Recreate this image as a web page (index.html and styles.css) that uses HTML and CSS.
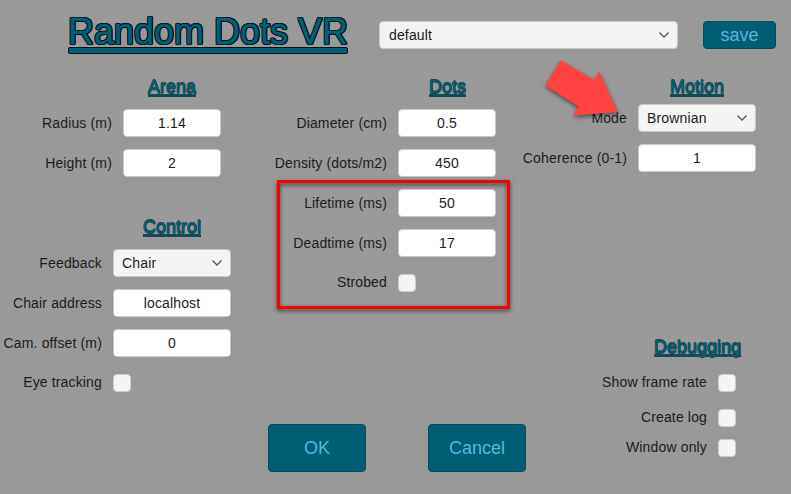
FILE: index.html
```html
<!DOCTYPE html>
<html lang="en">
<head>
<meta charset="utf-8">
<title>Random Dots VR</title>
<link rel="stylesheet" href="styles.css">
</head>
<body>
<header class="top">
  <h1 class="title">Random Dots VR</h1>
  <div class="field select preset"><span>default</span><svg class="chev" viewBox="0 0 12 8"><path d="M1.500 1.500 6 6l4.500-4.500"/></svg></div>
  <button class="btn save">save</button>
</header>
<main class="columns">
  <div class="col col-left">
    <section class="group arena">
      <h2>Arena</h2>
      <div class="row"><label>Radius (m)</label><div class="field">1.14</div></div>
      <div class="row"><label>Height (m)</label><div class="field">2</div></div>
    </section>
    <section class="group control">
      <h2>Control</h2>
      <div class="row"><label>Feedback</label><div class="field select"><span>Chair</span><svg class="chev" viewBox="0 0 12 8"><path d="M1.500 1.500 6 6l4.500-4.500"/></svg></div></div>
      <div class="row"><label>Chair address</label><div class="field">localhost</div></div>
      <div class="row"><label>Cam. offset (m)</label><div class="field">0</div></div>
      <div class="row toggle"><label>Eye tracking</label><div class="check"></div></div>
    </section>
  </div>
  <div class="col col-mid">
    <section class="group dots">
      <h2>Dots</h2>
      <div class="row"><label>Diameter (cm)</label><div class="field">0.5</div></div>
      <div class="row"><label>Density (dots/m2)</label><div class="field">450</div></div>
      <div class="row"><label>Lifetime (ms)</label><div class="field">50</div></div>
      <div class="row"><label>Deadtime (ms)</label><div class="field">17</div></div>
      <div class="row toggle"><label>Strobed</label><div class="check"></div></div>
    </section>
    <div class="actions">
      <button class="btn">OK</button>
      <button class="btn">Cancel</button>
    </div>
  </div>
  <div class="col col-right">
    <section class="group motion">
      <h2>Motion</h2>
      <div class="row"><label>Mode</label><div class="field select"><span>Brownian</span><svg class="chev" viewBox="0 0 12 8"><path d="M1.500 1.500 6 6l4.500-4.500"/></svg></div></div>
      <div class="row"><label>Coherence (0-1)</label><div class="field">1</div></div>
    </section>
    <section class="group debugging">
      <h2>Debugging</h2>
      <div class="row toggle"><label>Show frame rate</label><div class="check"></div></div>
      <div class="row toggle"><label>Create log</label><div class="check"></div></div>
      <div class="row toggle"><label>Window only</label><div class="check"></div></div>
    </section>
  </div>
</main>
<div class="highlight"></div>
<svg class="arrow" viewBox="0 0 90 70"><path d="M20.700 5.300 54.500 25 59.500 16.500 78 57 33.500 60.500 38.500 51.500 5.500 30.500Z"/></svg>
</body>
</html>
```
FILE: styles.css
```css
* { box-sizing: border-box; }

body {
  margin: 0;
  width: 791px;
  height: 494px;
  overflow: hidden;
  position: relative;
  background: #999;
  color: #1c1c1c;
  font: 14px/20px "Liberation Sans", Arial, sans-serif;
  letter-spacing: 0.150px;
}

.top {
  display: flex;
  align-items: flex-start;
  height: 70px;
  padding-left: 68px;
}

.title {
  width: 280px;
  height: 40px;
  margin: 13px 31px 0 0;
  font-size: 36px;
  line-height: 38px;
  font-weight: 400;
  letter-spacing: 0;
  white-space: nowrap;
  color: #006078;
  -webkit-text-stroke: 0.500px #006078;
  text-shadow:
    1.200px 0 0 #050d10, -1.200px 0 0 #050d10,
    0 1.200px 0 #050d10, 0 -1.200px 0 #050d10,
    1px 1px 0 #050d10, -1px 1px 0 #050d10,
    1px -1px 0 #050d10, -1px -1px 0 #050d10;
}

.title::after {
  content: "";
  display: block;
  height: 5px;
  margin-top: -4px;
  border: 1px solid #050d10;
  border-radius: 2px;
  background: #006078;
}

.field {
  display: flex;
  align-items: center;
  justify-content: center;
  height: 28px;
  border: 1px solid #c9c9c9;
  border-radius: 4px;
  background: #fff;
}

.select {
  justify-content: space-between;
  padding: 0 7px 0 8px;
  background: #f4f4f4;
}

.preset {
  width: 299px;
  margin: 21px 25px 0 0;
  padding-left: 9px;
}

.chev {
  width: 12px;
  height: 8px;
  fill: none;
  stroke: #555;
  stroke-width: 1.300;
}

.btn {
  width: 98px;
  height: 48px;
  padding: 0;
  border: 1px solid #084a58;
  border-radius: 4px;
  background: #005f75;
  color: #57b5da;
  font: 18px/20px "Liberation Sans", Arial, sans-serif;
}

.save {
  width: 73px;
  height: 28px;
  margin-top: 21px;
}

.columns {
  display: grid;
  grid-template-columns: 256px 260px 275px;
  height: 424px;
}

.col {
  display: flex;
  flex-direction: column;
}

.group h2 {
  width: max-content;
  height: 19px;
  margin: 0 0 12px;
  border-bottom: 3px solid #124b58;
  font-size: 18px;
  line-height: 18px;
  font-weight: 400;
  letter-spacing: 0;
  color: #006078;
  -webkit-text-stroke: 0.300px #006078;
  text-shadow:
    0.600px 0 0 #2a3c40, -0.600px 0 0 #2a3c40,
    0 0.600px 0 #2a3c40, 0 -0.600px 0 #2a3c40;
}

.row {
  display: grid;
  gap: 11px;
  align-items: center;
  height: 28px;
  margin-bottom: 12px;
}

.row label {
  text-align: right;
  white-space: nowrap;
}

.toggle label {
  margin: -2px 0 0;
}

.check {
  width: 18px;
  height: 18px;
  border: 1px solid #ccc;
  border-radius: 4px;
  background: #f4f4f4;
}

.arena { padding-top: 8px; }
.arena .row { grid-template-columns: 112px 98px; }
.arena h2 { margin-left: 148px; }

.control { padding-top: 29px; }
.control .row { grid-template-columns: 102px 118px; }
.control h2 { margin-left: 143px; }

.dots { padding-top: 8px; }
.dots .row { grid-template-columns: 131px 98px; }
.dots h2 { margin-left: 173px; }

.actions {
  display: flex;
  gap: 62px;
  margin: 115px -10px 0 12px;
}

.motion { padding-top: 8px; }
.motion .row { grid-template-columns: 111px 118px; }
.motion h2 { margin: 0 0 7px 154px; }

.debugging { padding-top: 154px; }
.debugging .row { grid-template-columns: 191px 18px; height: 18px; margin-bottom: 17px; }
.debugging .row:last-child { margin-top: -5px; }
.debugging h2 { margin: 0 0 17px 138px; }

.highlight {
  position: absolute;
  left: 277px;
  top: 180px;
  width: 233px;
  height: 129px;
  border: 3px solid #fe0000;
  filter: drop-shadow(0 2px 2px rgba(0, 0, 0, 0.6));
}

.arrow {
  position: absolute;
  left: 540px;
  top: 55px;
  width: 90px;
  height: 70px;
  overflow: visible;
  fill: #ff4343;
  filter: drop-shadow(0 2px 2px rgba(0, 0, 0, 0.5));
}
```
